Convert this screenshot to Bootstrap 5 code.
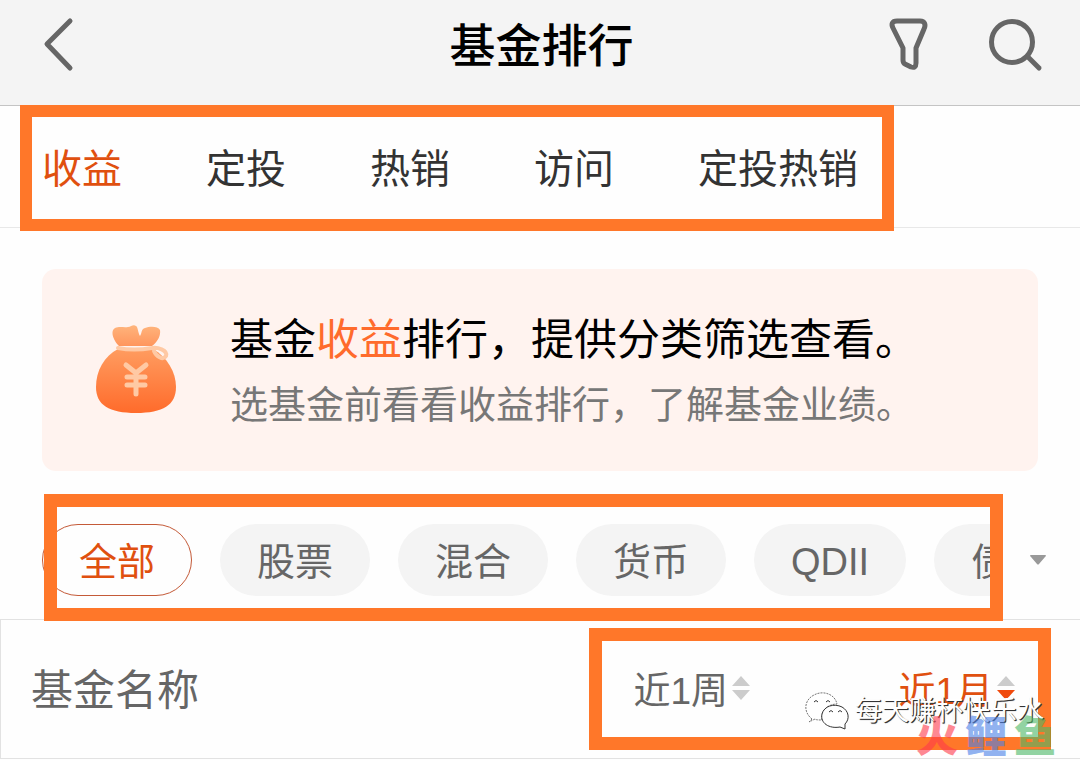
<!DOCTYPE html>
<html lang="zh-CN">
<head>
<meta charset="utf-8">
<meta name="viewport" content="width=device-width, initial-scale=1">
<title>基金排行</title>
<link href="https://cdn.jsdelivr.net/npm/bootstrap@5.3.0/dist/css/bootstrap.min.css" rel="stylesheet">
<style>
  body { font-family: "Liberation Sans", "Noto Sans CJK SC", sans-serif; background: #fefefe; color: #333; overflow-x: hidden; }
  button { color: inherit; }
  .plain { border: 0; background: none; padding: 0; line-height: 1; }
  .plain svg, .bag { display: block; }
  .topbar { background: #f4f4f4; border-bottom: 1px solid #c4c4c4; padding: 0 37px 17px 40px; color: #666; }
  .topbar h1 { font-size: 46px; line-height: 84px; padding-top: 4px; font-weight: 500; color: #000; }
  .side { flex: 1 1 0; }
  .tabs { gap: 84px; padding: 6px 42px 0; border-bottom: 1px solid #e8e8e8; }
  .tabs a { font-size: 40px; line-height: 115px; color: #333; text-decoration: none; white-space: nowrap; }
  .tabs a.active { color: #e0500f; }
  .frame { position: absolute; z-index: 1; border: 12px solid #ff7729; pointer-events: none; }
  .frame-tabs { left: 20px; top: -1px; bottom: -3px; width: 874px; }
  .frame-kinds { left: 44px; right: 77px; top: -30px; bottom: -2px; border-width: 13px; }
  .frame-periods { left: 589px; right: 29px; top: 9px; bottom: 9px; border-width: 13px; }
  .notice { margin: 41px 42px 0; padding: 33px 53px; gap: 53px; background: #fff3ef; border-radius: 14px; }
  .notice-text { padding-top: 6px; }
  .notice p { line-height: 65px; white-space: nowrap; }
  .notice-title { font-size: 43px; color: #000; }
  .notice-title span { color: #ff6b2c; }
  .notice-sub { font-size: 38px; color: #777; }
  .kinds { margin-top: 53px; padding: 0 34px 23px 42px; }
  .kinds-list { gap: 28px; overflow: hidden; margin-right: 36px; }
  .pill { flex: none; height: 72px; padding: 4px 37px 0; border: 0; border-radius: 36px; background: #f4f4f4; color: #666; font-size: 38px; line-height: 68px; white-space: nowrap; }
  .pill.active { background: #fefefe; border: 1px solid #c45a38; padding: 4px 36px 0; line-height: 66px; color: #e0500f; }
  .funds { border: 1px solid #e2e2e2; border-right: 0; }
  .funds th { padding: 4px 0 0; font-weight: 400; color: #666; line-height: 134px; white-space: nowrap; }
  .funds .fund-name { font-size: 42px; padding-left: 30px; }
  .funds .period { width: 330px; padding-right: 65px; }
  .funds button { font-size: 37px; gap: 4px; vertical-align: middle; }
  .funds svg { margin-bottom: 8px; }
  .funds .chosen { color: #e0500f; }
  .credit { position: absolute; z-index: 2; right: 36px; bottom: 28px; gap: 6px; font-size: 27px; line-height: 40px; color: #fff; text-shadow: 1px 1px 0 #333, 1px 1px 1px #555; }
  .credit svg { display: block; }
  .stamp { position: absolute; z-index: 2; right: 24px; bottom: 0; gap: 7px; font-size: 42px; line-height: 42px; font-weight: 900; opacity: .6; }
</style>
</head>
<body>
<header class="topbar d-flex align-items-center">
  <div class="side d-flex">
    <button class="plain" type="button" aria-label="返回">
      <svg width="36" height="56" viewBox="0 0 36 56" fill="none" stroke="currentColor" stroke-width="5" stroke-linecap="round" stroke-linejoin="round"><path d="M30 5 7 28l23 24"/></svg>
    </button>
  </div>
  <h1 class="mb-0">基金排行</h1>
  <div class="side d-flex justify-content-end" style="gap:58px">
    <button class="plain" type="button" aria-label="筛选">
      <svg width="42" height="56" viewBox="0 0 42 56" fill="none" stroke="currentColor" stroke-width="5" stroke-linejoin="round"><path d="M10 5h23c5 0 6 4 4 8L29 32v15c0 4-2 5-5 4l-6-3q-2-1-2-4V32L6 12C4 8 5 5 10 5Z"/></svg>
    </button>
    <button class="plain" type="button" aria-label="搜索">
      <svg width="56" height="56" viewBox="0 0 56 56" fill="none" stroke="currentColor" stroke-width="5" stroke-linecap="round"><circle cx="25" cy="26" r="20.500"/><path d="m41 41 11 11"/></svg>
    </button>
  </div>
</header>

<main>
  <div class="position-relative">
    <nav class="tabs d-flex">
      <a class="active" href="#" aria-current="page">收益</a>
      <a href="#">定投</a>
      <a href="#">热销</a>
      <a href="#">访问</a>
      <a href="#">定投热销</a>
    </nav>
    <div class="frame frame-tabs"></div>
  </div>

  <section class="notice d-flex align-items-center">
    <svg class="bag flex-shrink-0" width="82" height="90" viewBox="0 0 82 90">
      <defs>
        <linearGradient id="body" x1="0" y1="0" x2="0" y2="1"><stop offset="0" stop-color="#ff9c60"/><stop offset="1" stop-color="#ff6b2b"/></linearGradient>
        <linearGradient id="neck" x1="0" y1="0" x2="0" y2="1"><stop offset="0" stop-color="#ffb47c"/><stop offset="1" stop-color="#ff965d"/></linearGradient>
      </defs>
      <path fill="url(#neck)" d="M24 21C18 15 15 6 20 3c5-2 9 0 13-1 3 0 5-3 8-1 2 1 2 7 4 10 2-3 1-7 5-8 5-2 13-2 15 2 1 6-3 12-8 16Z"/>
      <path fill="url(#body)" d="M23 24h35c14 8 23 23 23 38 0 18-13 26-40 26S1 80 1 62C1 46 9 31 23 24Z"/>
      <g fill="none" stroke="#ffc9a4" stroke-linecap="round" stroke-linejoin="round">
        <path stroke-width="4" d="M23 23c10 2 22 2 34 0 5-1 16 2 14 8-3 5-10 0-12-5"/>
        <path stroke-width="5" d="m31 40 10 8 10-8M41 48v21M32 52h18M32 60h18"/>
      </g>
    </svg>
    <div class="notice-text">
      <p class="notice-title m-0">基金<span>收益</span>排行，提供分类筛选查看。</p>
      <p class="notice-sub m-0">选基金前看看收益排行，了解基金业绩。</p>
    </div>
  </section>

  <div class="kinds position-relative d-flex align-items-center">
    <div class="kinds-list d-flex flex-grow-1">
      <button class="pill active" type="button" aria-pressed="true">全部</button>
      <button class="pill" type="button">股票</button>
      <button class="pill" type="button">混合</button>
      <button class="pill" type="button">货币</button>
      <button class="pill" type="button">QDII</button>
      <button class="pill" type="button">债券</button>
    </div>
    <button class="plain" type="button" aria-label="更多分类">
      <svg width="16" height="10" viewBox="0 0 16 10"><path fill="#999" d="M1 0h14q2 0 0 2L9 9q-1 1-2 0L1 2Q-1 0 1 0Z"/></svg>
    </button>
    <div class="frame frame-kinds"></div>
  </div>

  <div class="position-relative">
    <table class="funds w-100">
      <thead>
        <tr>
          <th class="fund-name" scope="col">基金名称</th>
          <th class="text-end" scope="col">
            <button class="plain d-inline-flex align-items-center" type="button">近1周
              <svg width="18" height="24" viewBox="0 0 18 24" fill="#ccc"><path d="m9 0 9 10H0ZM0 14h18l-9 10Z"/></svg>
            </button>
          </th>
          <th class="period text-end" scope="col" aria-sort="descending">
            <button class="plain chosen d-inline-flex align-items-center" type="button">近1月
              <svg width="18" height="24" viewBox="0 0 18 24"><path fill="#ccc" d="m9 0 9 10H0Z"/><path fill="#f04a0c" d="M0 14h18l-9 10Z"/></svg>
            </button>
          </th>
        </tr>
      </thead>
    </table>
    <div class="frame frame-periods"></div>
    <div class="credit d-flex align-items-center">
      <svg width="44" height="38" viewBox="0 0 44 38" fill="#fff" stroke="#333" stroke-width="1">
        <path stroke="#777" stroke-dasharray="2 1" d="M7 27c-9-7-8-19 2-24 9-5 21-1 23 9-9 0-17 7-15 16-3 0-6 0-7-1l-6 3Z"/>
        <path d="M40 32c5-5 4-13-3-17-8-4-18-1-20 7-2 9 7 15 18 13l5 2Z"/>
        <path fill="none" d="M9 10q2-3 4 0M21 10q2-3 4 0M24 20q2-3 4 0M33 20q2-3 4 0"/>
      </svg>
      <span>每天赚杯快乐水</span>
    </div>
    <div class="stamp d-flex"><span style="color:#ff3b4b">火</span><span style="color:#4a80e8">鲤</span><span style="color:#4cb866">鱼</span></div>
  </div>
</main>
<script src="https://cdn.jsdelivr.net/npm/bootstrap@5.3.0/dist/js/bootstrap.bundle.min.js"></script>
</body>
</html>
